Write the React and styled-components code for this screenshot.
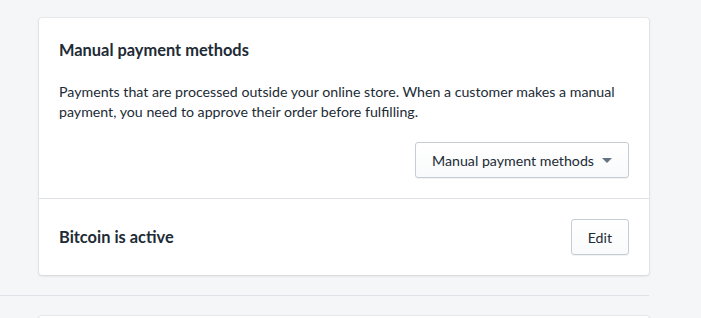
import React from "react";
import styled, { createGlobalStyle } from "styled-components";

const GlobalStyle = createGlobalStyle`
  html, body {
    margin: 0;
    padding: 0;
    background: #f4f6f8;
  }
  body {
    font-family: Lato, "Open Sans", "Liberation Sans", sans-serif;
    color: #212b36;
    -webkit-font-smoothing: antialiased;
  }
`;

const Page = styled.div`
  width: 649px;
  padding-top: 18px;
`;

const Indent = styled.div`
  padding-left: 39px;
`;

const Card = styled.div`
  background: #fff;
  border-radius: 3px;
  box-shadow: 0 0 0 1px rgba(63, 63, 68, 0.05), 0 1px 3px 0 rgba(63, 63, 68, 0.15);
  height: ${(p) => (p.stub ? "20px" : "auto")};
`;

const Section = styled.div`
  padding: 20px;
  & + & {
    border-top: 1px solid #dfe3e8;
  }
`;

const Heading = styled.h2`
  margin: 0 0 20px;
  font-size: 16.4px;
  line-height: 24px;
  font-weight: 700;
`;

const Text = styled.p`
  margin: 0;
  font-size: 14.2px;
  line-height: 20px;
`;

const Actions = styled.div`
  display: flex;
  justify-content: flex-end;
  margin-top: 20px;
`;

const Row = styled.div`
  display: flex;
  align-items: center;
  justify-content: space-between;
`;

const RowTitle = styled.span`
  font-size: 16.4px;
  line-height: 24px;
  font-weight: 700;
`;

const Button = styled.button`
  display: inline-flex;
  align-items: center;
  gap: 8px;
  height: 36px;
  padding: 0 16px;
  font-family: inherit;
  font-size: 14.2px;
  color: #212b36;
  background: linear-gradient(180deg, #fff, #f9fafb);
  border: 1px solid #c4cdd5;
  border-radius: 3px;
  box-shadow: 0 1px 0 0 rgba(22, 29, 37, 0.05);
  cursor: pointer;
`;

const Caret = styled.span`
  width: 0;
  height: 0;
  border-left: 5px solid transparent;
  border-right: 5px solid transparent;
  border-top: 5px solid #637381;
`;

const Divider = styled.hr`
  margin: 20px 0;
  border: 0;
  border-top: 1px solid #dfe3e8;
`;

export default function App() {
  return (
    <>
      <GlobalStyle />
      <Page>
        <Indent>
          <Card>
            <Section>
              <Heading>Manual payment methods</Heading>
              <Text>
                Payments that are processed outside your online store. When a
                customer makes a manual payment, you need to approve their order
                before fulfilling.
              </Text>
              <Actions>
                <Button>
                  Manual payment methods
                  <Caret />
                </Button>
              </Actions>
            </Section>
            <Section>
              <Row>
                <RowTitle>Bitcoin is active</RowTitle>
                <Button>Edit</Button>
              </Row>
            </Section>
          </Card>
        </Indent>
        <Divider />
        <Indent>
          <Card stub />
        </Indent>
      </Page>
    </>
  );
}
